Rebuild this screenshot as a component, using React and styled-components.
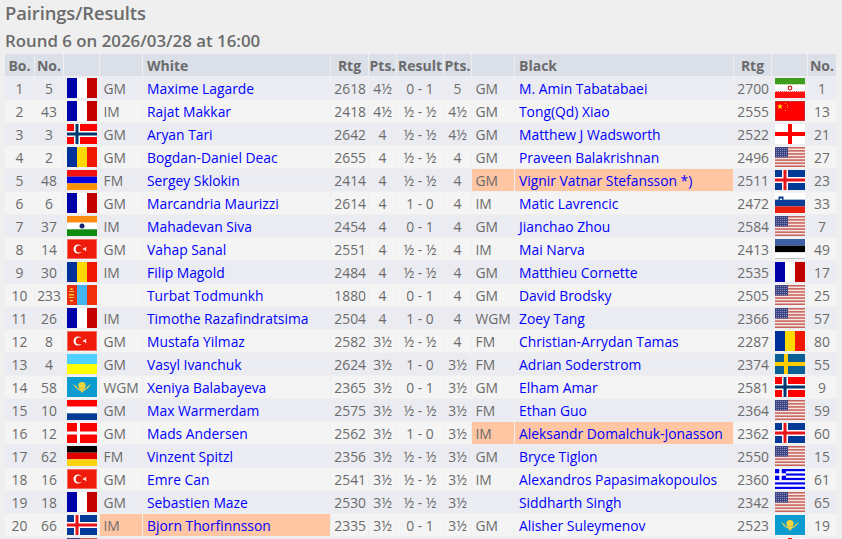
import React from 'react'
import styled, { createGlobalStyle } from 'styled-components'

const GlobalStyle = createGlobalStyle`
  html, body {
    margin: 0;
    height: 100%;
    overflow: hidden;
    background: #efefef;
  }
  body {
    font-family: "Open Sans", "Noto Sans", sans-serif;
    color: #6b6b6b;
  }
`

const Stripes = ({ colors, vertical }) =>
  colors.map((c, i) => {
    const n = colors.length
    return vertical
      ? <rect key={i} x={(30 / n) * i} y="0" width={30 / n} height="20" fill={c} />
      : <rect key={i} x="0" y={(20 / n) * i} width="30" height={20 / n} fill={c} />
  })

const NordicCross = ({ bg, outer, inner, cx = 10 }) => (
  <>
    <rect width="30" height="20" fill={bg} />
    <rect x={cx - 3} width="6" height="20" fill={outer} />
    <rect y="7" width="30" height="6" fill={outer} />
    <rect x={cx - 1.5} width="3" height="20" fill={inner} />
    <rect y="8.5" width="30" height="3" fill={inner} />
  </>
)

const KzEmblem = () => (
  <>
    <rect width="30" height="20" fill="#0a9bd0" />
    <circle cx="15" cy="8.500" r="3.600" fill="#f3d43a" />
    <path d="M6 7c2 3 3 5 7 6.500l2 2.500 2-2.500c4-1.500 5-3.500 7-6.500-2 1-4 2.500-5 4.500h-8c-1-2-3-3.500-5-4.500z" fill="#e8d050" />
  </>
)

const FLAGS = {
  fr: () => <Stripes vertical colors={['#0000a8', '#ffffff', '#c20000']} />,
  ro: () => <Stripes vertical colors={['#00309a', '#ffd800', '#f01800']} />,
  de: () => <Stripes colors={['#000000', '#e00000', '#ffd40e']} />,
  nl: () => <Stripes colors={['#ff0000', '#ffffff', '#003c96']} />,
  am: () => <Stripes colors={['#f01010', '#0000e0', '#ff9000']} />,
  ee: () => (
    <>
      <Stripes colors={['#3f5fa6', '#000000', '#ffffff']} />
      <rect y="19" width="30" height="1" fill="#bcbcbc" />
    </>
  ),
  ua: () => <Stripes colors={['#50d0ff', '#ffff00']} />,
  no: () => <NordicCross bg="#ff0000" outer="#ffffff" inner="#00386e" />,
  is: () => <NordicCross bg="#003a96" outer="#ffffff" inner="#e8141c" />,
  dk: () => (
    <>
      <rect width="30" height="20" fill="#ff0000" />
      <rect x="10" width="3" height="20" fill="#fff" />
      <rect y="8.5" width="30" height="3" fill="#fff" />
    </>
  ),
  se: () => (
    <>
      <rect width="30" height="20" fill="#0a6096" />
      <rect x="9" width="4" height="20" fill="#ffcc00" />
      <rect y="8" width="30" height="4" fill="#ffcc00" />
    </>
  ),
  eng: () => (
    <>
      <rect width="30" height="20" fill="#fff" />
      <rect x="13" width="4" height="20" fill="#ff0000" />
      <rect y="8" width="30" height="4" fill="#ff0000" />
    </>
  ),
  ir: () => (
    <>
      <Stripes colors={['#3f9c1c', '#ffffff', '#ff1010']} />
      <path d="M0 6.500h30" stroke="#e4f0d8" strokeDasharray="1 1" />
      <path d="M0 13.500h30" stroke="#ffd0d0" strokeDasharray="1 1" />
      <circle cx="15" cy="10" r="1.800" fill="none" stroke="#d82020" strokeWidth="1.200" />
    </>
  ),
  cn: () => (
    <>
      <rect width="30" height="20" fill="#ff0000" />
      <rect x="0.300" y="0.300" width="29.400" height="19.400" fill="none" stroke="#a04848" strokeWidth="0.600" />
      <path d="M5 2.500l.8 2h2.200l-1.800 1.300.7 2.200L5 6.700 3.100 8l.7-2.200L2 4.500h2.200z" fill="#ffe000" />
      <path d="M10 2h1v1h-1zM12 4h1v1h-1zM12 6h1v1h-1zM10 9h1v1h-1z" fill="#ffb000" />
    </>
  ),
  us: () => (
    <>
      <rect width="30" height="20" fill="#f4e6e2" />
      {[0, 1, 2, 3, 4, 5, 6].map((i) => (
        <rect key={i} y={i * 3.08} width="30" height="1.54" fill="#c8625c" />
      ))}
      <rect width="13" height="10.500" fill="#3c4484" />
      <path d="M1 1.500h11M1 3.500h11M1 5.500h11M1 7.500h11M1 9.500h11" stroke="#a8aed0" strokeWidth="0.7" strokeDasharray="1 1" />
    </>
  ),
  si: () => (
    <>
      <Stripes colors={['#ffffff', '#0a3c96', '#e82010']} />
      <path d="M3.500 3.500h5v4c0 1.500-1.500 2.500-2.500 3-1-.5-2.500-1.500-2.500-3z" fill="#0a3c96" />
      <path d="M4.500 7l1.500-2 1.500 2z" fill="#fff" />
    </>
  ),
  in: () => (
    <>
      <Stripes colors={['#ff8c10', '#ffffff', '#0e8a10']} />
      <circle cx="15" cy="10" r="2.500" fill="#16256e" />
    </>
  ),
  tr: () => (
    <>
      <rect width="30" height="20" fill="#f01a0a" />
      <rect x="0.500" y="0.500" width="29" height="19" fill="none" stroke="#f06a60" />
      <circle cx="11" cy="10" r="4.500" fill="#fff" />
      <circle cx="12.300" cy="10" r="3.600" fill="#f01a0a" />
      <path d="M16 10l3.400-1.200-1.300 1.200 1.300 1.200zM18 7.800l.6 4.400" fill="#fff" stroke="#fff" strokeWidth="0.6" />
    </>
  ),
  mn: () => (
    <>
      <Stripes vertical colors={['#e82c10', '#44b4f0', '#f03008']} />
      <path d="M2 6h5v1H2zM2 9h5v1.500H2zM2 12h5v1H2zM3 15h3v1.500H3zM3.500 3h2v2h-2z" fill="#f4cc30" />
    </>
  ),
  gr: () => (
    <>
      <rect width="30" height="20" fill="#fff" />
      {[0, 1, 2, 3, 4].map((i) => (
        <rect key={i} y={i * 4.44} width="30" height="2.220" fill="#0000f0" />
      ))}
      <rect width="11" height="11" fill="#0000f0" />
      <rect x="4.300" width="2.400" height="11" fill="#fff" />
      <rect y="4.300" width="11" height="2.400" fill="#fff" />
    </>
  ),
  kz: KzEmblem,
}

const Flag = ({ code }) => {
  const Art = FLAGS[code]
  return (
    <FlagSvg viewBox="0 0 30 20" width="30" height="20">
      <Art />
    </FlagSvg>
  )
}

const rows = [
  [1, 5, 'fr', 'GM', 'Maxime Lagarde', 2618, '4½', '0 - 1', '5', 'GM', 'M. Amin Tabatabaei', 2700, 'ir', 1],
  [2, 43, 'fr', 'IM', 'Rajat Makkar', 2418, '4½', '½ - ½', '4½', 'GM', 'Tong(Qd) Xiao', 2555, 'cn', 13],
  [3, 3, 'no', 'GM', 'Aryan Tari', 2642, '4', '½ - ½', '4½', 'GM', 'Matthew J Wadsworth', 2522, 'eng', 21],
  [4, 2, 'ro', 'GM', 'Bogdan-Daniel Deac', 2655, '4', '½ - ½', '4', 'GM', 'Praveen Balakrishnan', 2496, 'us', 27],
  [5, 48, 'am', 'FM', 'Sergey Sklokin', 2414, '4', '½ - ½', '4', 'GM', 'Vignir Vatnar Stefansson *)', 2511, 'is', 23, 'black'],
  [6, 6, 'fr', 'GM', 'Marcandria Maurizzi', 2614, '4', '1 - 0', '4', 'IM', 'Matic Lavrencic', 2472, 'si', 33],
  [7, 37, 'in', 'IM', 'Mahadevan Siva', 2454, '4', '0 - 1', '4', 'GM', 'Jianchao Zhou', 2584, 'us', 7],
  [8, 14, 'tr', 'GM', 'Vahap Sanal', 2551, '4', '½ - ½', '4', 'IM', 'Mai Narva', 2413, 'ee', 49],
  [9, 30, 'ro', 'IM', 'Filip Magold', 2484, '4', '½ - ½', '4', 'GM', 'Matthieu Cornette', 2535, 'fr', 17],
  [10, 233, 'mn', '', 'Turbat Todmunkh', 1880, '4', '0 - 1', '4', 'GM', 'David Brodsky', 2505, 'us', 25],
  [11, 26, 'fr', 'IM', 'Timothe Razafindratsima', 2504, '4', '1 - 0', '4', 'WGM', 'Zoey Tang', 2366, 'us', 57],
  [12, 8, 'tr', 'GM', 'Mustafa Yilmaz', 2582, '3½', '½ - ½', '4', 'FM', 'Christian-Arrydan Tamas', 2287, 'ro', 80],
  [13, 4, 'ua', 'GM', 'Vasyl Ivanchuk', 2624, '3½', '1 - 0', '3½', 'FM', 'Adrian Soderstrom', 2374, 'se', 55],
  [14, 58, 'kz', 'WGM', 'Xeniya Balabayeva', 2365, '3½', '0 - 1', '3½', 'GM', 'Elham Amar', 2581, 'no', 9],
  [15, 10, 'nl', 'GM', 'Max Warmerdam', 2575, '3½', '½ - ½', '3½', 'FM', 'Ethan Guo', 2364, 'us', 59],
  [16, 12, 'dk', 'GM', 'Mads Andersen', 2562, '3½', '1 - 0', '3½', 'IM', 'Aleksandr Domalchuk-Jonasson', 2362, 'is', 60, 'black'],
  [17, 62, 'de', 'FM', 'Vinzent Spitzl', 2356, '3½', '½ - ½', '3½', 'GM', 'Bryce Tiglon', 2550, 'us', 15],
  [18, 16, 'tr', 'GM', 'Emre Can', 2541, '3½', '½ - ½', '3½', 'IM', 'Alexandros Papasimakopoulos', 2360, 'gr', 61],
  [19, 18, 'fr', 'GM', 'Sebastien Maze', 2530, '3½', '½ - ½', '3½', '', 'Siddharth Singh', 2342, 'us', 65],
  [20, 66, 'is', 'IM', 'Bjorn Thorfinnsson', 2335, '3½', '0 - 1', '3½', 'GM', 'Alisher Suleymenov', 2523, 'kz', 19, 'white'],
  ['', '', 'us', '', '', '', '', '', '', '', '', '', 'eng', ''],
]

const widths = [29, 28, 35, 42, 187, 37, 27, 46, 27, 42, 218, 37, 35, 28]

const App = () => (
  <Page>
    <GlobalStyle />
    <Title>Pairings/Results</Title>
    <Subtitle>Round 6 on 2026/03/28 at 16:00</Subtitle>
    <Table>
      <colgroup>
        {widths.map((w, i) => <col key={i} width={w} />)}
      </colgroup>
      <thead>
        <tr>
          <Th>Bo.</Th>
          <Th>No.</Th>
          <Th />
          <Th />
          <Th $left>White</Th>
          <Th>Rtg</Th>
          <Th>Pts.</Th>
          <Th>Result</Th>
          <Th>Pts.</Th>
          <Th />
          <Th $left>Black</Th>
          <Th>Rtg</Th>
          <Th />
          <Th>No.</Th>
        </tr>
      </thead>
      <tbody>
        {rows.map(([bo, no, fl, ti, white, rw, pw, res, pb, tb, black, rb, fb, nb, mark], i) => (
          <Row key={i}>
            <Num>{bo}</Num>
            <Num>{no}</Num>
            <FlagCell><Flag code={fl} /></FlagCell>
            <TitleCell $marked={mark === 'white'}>{ti}</TitleCell>
            <Name $marked={mark === 'white'}><PlayerLink href="#">{white}</PlayerLink></Name>
            <Rating>{rw}</Rating>
            <Num>{pw}</Num>
            <Num>{res}</Num>
            <Num>{pb}</Num>
            <TitleCell $marked={mark === 'black'}>{tb}</TitleCell>
            <Name $marked={mark === 'black'}><PlayerLink href="#">{black}</PlayerLink></Name>
            <Rating>{rb}</Rating>
            <FlagCell><Flag code={fb} /></FlagCell>
            <Num>{nb}</Num>
          </Row>
        ))}
      </tbody>
    </Table>
  </Page>
)

export default App

const Page = styled.div`
  padding: 0 5px;
`

const Title = styled.h2`
  margin: 0;
  height: 27px;
  font-size: 18.4px;
  line-height: 25px;
  font-weight: 600;
  color: #6b6b6b;
  letter-spacing: -0.1px;
`

const Subtitle = styled.h3`
  margin: 0;
  height: 26px;
  font-size: 16.85px;
  line-height: 28px;
  font-weight: 600;
  color: #6b6b6b;
`

const Table = styled.table`
  table-layout: fixed;
  width: 831px;
  margin-left: -1px;
  border-collapse: separate;
  border-spacing: 1px;
  font-size: 13.85px;
`

const Th = styled.th`
  height: 22px;
  padding: 0;
  background: #dbdfe8;
  font-size: 14px;
  font-weight: 700;
  color: #6b6b6b;
  text-align: ${(p) => (p.$left ? 'left' : 'center')};
  padding-left: ${(p) => (p.$left ? '4px' : '0')};
  white-space: nowrap;
`

const Row = styled.tr`
  background: #f4f4f4;
  &:nth-child(odd) {
    background: #ebecf1;
  }
`

const Num = styled.td`
  height: 22px;
  padding: 0;
  text-align: center;
  white-space: nowrap;
`

const Rating = styled(Num)`
  text-align: right;
  padding-right: 2px;
`

const FlagCell = styled(Num)`
  line-height: 0;
`

const FlagSvg = styled.svg`
  display: inline-block;
  vertical-align: middle;
`

const TitleCell = styled(Num)`
  text-align: left;
  padding-left: 3.5px;
  background: ${(p) => (p.$marked ? '#ffc6a4' : 'transparent')};
`

const Name = styled(TitleCell)`
  padding-left: 4px;
`

const PlayerLink = styled.a`
  color: #0000ff;
  text-decoration: none;
`
